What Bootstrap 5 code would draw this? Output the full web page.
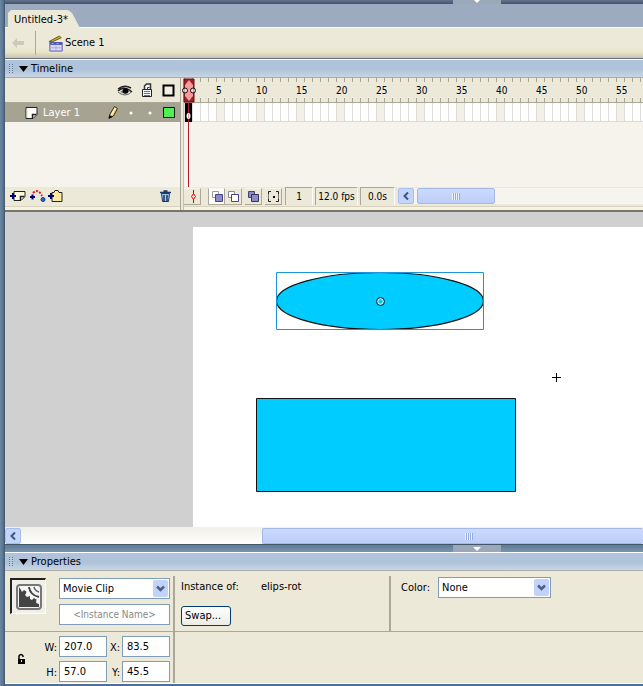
<!DOCTYPE html>
<html lang="en">
<head>
<meta charset="utf-8">
<meta name="viewport" content="width=device-width, initial-scale=1">
<title>Untitled-3*</title>
<link rel="stylesheet" href="https://cdn.jsdelivr.net/npm/bootstrap@5.3.0/dist/css/bootstrap.min.css">
<style>
:root{--face:#ece9d8;--line:#aca899;--field:#7f9db9}
body{font-family:"DejaVu Sans Condensed","DejaVu Sans",sans-serif;font-size:11px;line-height:16px;color:#000;background:#6f8ba8}
svg{display:block;flex:none}
button,select,input{font:inherit;color:#000}
.shell{min-height:100vh;padding-left:5px;background:linear-gradient(90deg,#6d87a3 0,#5a7590 3px,#405468 5px,#6f8ba8 5px)}
.grip-strip{height:4px;background:linear-gradient(#66758d,#42526b);padding-left:448px}
.grip{width:48px;height:100%;background:#9aa8b8}
.tabs{height:23px;padding:6px 0 0 3px;background:#9dabc1}
.doc-tab{width:72px;height:18px;border:0;padding:1px 0 0 6px;text-align:left;background:var(--face);clip-path:polygon(0 3px,3px 0,60px 0,64px 3px,72px 100%,0 100%)}
.scene-bar{height:32px;border-top:1px solid #fff;border-bottom:1px solid #667080;background:linear-gradient(#ece9d8 60%,#e9e5ca 80%,#c5c4b0)}
.back{width:31px;height:24px;border:0;border-right:1px solid var(--line);background:none;padding:0 0 0 6px}
.panel-title{height:19px;border-top:1px solid #fff;border-bottom:1px solid #a9aca9;background:linear-gradient(#b0c3dc,#aec3d8 55%,#c8d6e6);padding-left:4px;gap:4px}
.panel-title h2{font-size:11px;line-height:16px;font-weight:400;margin:0 0 0 -2px}
.dots{width:5px;height:10px;background:repeating-linear-gradient(transparent 0 1px,#bacce0 1px 2px),repeating-linear-gradient(90deg,#5f7592 0 1px,transparent 1px 3px)}
.timeline{display:grid;grid-template-columns:175px 4px 1fr;background:var(--face);border-bottom:2px solid #77766a}
.splitter{background:var(--face);border-left:1px solid var(--line);border-right:1px solid #c5c1b4}
.head-row{height:25px;border-bottom:1px solid #aaa698}
.layer-heads{padding-right:5px}
.layer-row{height:19px;background:#a6a393;color:#fff;padding:0 5px 0 19px}
.keys-empty{height:65px;background:#f5f3ec}
.tool-row{height:23px;padding-bottom:5px;background:var(--face);box-shadow:inset 0 -3px #f6f3df,inset 0 -4px #d6d2bf}
.icon-btn{border:0;padding:0;background:none}
.ruler{padding:5px 0 0 32px;overflow:hidden;background:repeating-linear-gradient(90deg,#a9a596 0 1px,transparent 1px 8px) 0 0/100% 4px no-repeat,repeating-linear-gradient(90deg,#a9a596 0 1px,transparent 1px 8px) 0 100%/100% 4px no-repeat,var(--face);font-size:10px}
.ruler span{flex:0 0 40px}
.frames{height:19px;border-bottom:1px solid #dedbd0;background:repeating-linear-gradient(90deg,#dedcd6 0 1px,transparent 1px 8px),repeating-linear-gradient(90deg,transparent 0 32px,#f3f0e8 32px 40px),#fff}
.track{position:relative}
.playhead{position:absolute;left:-3px;top:0}
.tb{height:17px;width:17px;flex:none;border:0;border-right:1px solid #aca899;border-bottom:1px solid #aca899;border-top:1px solid #f8f6ec;background:var(--face);padding:1px 2px}
.tb.on{background:#fff;border-left:1px solid #aca899}
.tools{gap:3px}
.status{gap:2px}
.status-cell{height:18px;line-height:17px;text-align:center;white-space:nowrap;border-left:1px solid var(--line);border-top:1px solid var(--line);font-size:10px;border-right:1px solid #fff}
.sc-frame{width:28px}.sc-rate{width:43px}.sc-time{width:35px}
.track-bar{background:#f5f4ee;gap:3px}
.sb-btn{width:16px;height:16px;border:1px solid #a9bff0;border-radius:2px;background:#c4d4fb;padding:2px}
.thumb{height:16px;border:1px solid #a4b9ea;border-radius:2px;background:linear-gradient(#cbdafe,#bccdf9);display:flex;align-items:center;justify-content:center}
.ridge{width:8px;height:7px;background:repeating-linear-gradient(90deg,#eef3ff 0 1px,#94abdf 1px 2px)}
.thumb-s{width:78px}
.stage{background:#d0d0d0;padding:15px 0 0 188px;min-height:300px}
.paper{background:#fff;overflow:hidden}
.hscroll{height:18px;padding-top:1px;background:linear-gradient(#f0efe8,#fefefb);border-bottom:1px solid #435568}
.hscroll .thumb{margin-left:241px;border-right:0;padding-left:32px}
.divider-bar{height:7px;padding-left:448px;background:linear-gradient(#5f7b96,#7895b0)}
.props{display:grid;grid-template-columns:170px 216px 1fr;background:var(--face);border-bottom:1px solid #fff}
.cell-a{height:61px;border-bottom:1px solid var(--line)}
.cell-b{height:51px}
.vr-line{background:linear-gradient(var(--line),var(--line)) right 5px/2px 100% no-repeat}
.vr-line.cell-b{background-position:right 0}
.kind-row{padding:7px 5px 0 5px}
.kind{width:36px;height:36px;border:1px solid #fff;border-top:2px solid #222;border-left:2px solid #222;padding:4px;background:#f0efe8}
.field{height:21px;border:1px solid var(--field);border-radius:0;background:#fff;padding:0 4px;min-width:0}
select.field{appearance:none;width:100%;padding:0 3px}
.combo{position:relative;width:111px}
.combo svg{position:absolute;right:2px;top:2px;pointer-events:none}
.combo-w{width:113px}
.inst{width:111px;text-align:center;font-size:10px}
.inst::placeholder{color:#888;opacity:1}
.kind-fields{gap:5px}
.nums{display:grid;grid-template-columns:33px 21px 48px 15px 48px;row-gap:3px;padding-top:3px;align-items:center}
.nums label{text-align:right;padding:3px 2px 0 0}
.nums .lock-cell{grid-row:span 2}
.swap{width:50px;height:20px;border:1px solid #003c74;border-radius:3px;background:linear-gradient(#fff,#ecebe6);padding:0 3px;text-align:left}
.inst-label{width:80px}
.col-mid{padding:8px 0 0 6px}
.col-mid .swap{margin-top:11px}
.col-tint{padding:6px 0 0 10px}
.foot-line{height:2px;background:#4a709c}
</style>
<script src="https://cdn.jsdelivr.net/npm/bootstrap@5.3.0/dist/js/bootstrap.bundle.min.js"></script>
</head>
<body>
<div class="shell d-flex flex-column">
  <div class="grip-strip"><div class="grip"><svg class="mx-auto" width="8" height="4"><path d="M1 0h6L4 3z" fill="#fff"/></svg></div></div>
  <div class="tabs"><button class="doc-tab">Untitled-3*</button></div>
  <nav class="scene-bar d-flex align-items-center">
    <button class="back" aria-label="Back"><svg width="14" height="12"><path d="M6 1 1 6l5 5V8h7V4H6z" fill="#cdcabb"/></svg></button>
    <svg class="ms-2 ps-1" width="21" height="17" viewBox="0 0 18 18"><path d="M1 7 12 1l2 2L5 7z" fill="#bda92e" stroke="#6b6015"/><path d="M2 8h13v9H2z" fill="#d8d8fa" stroke="#5656b0"/><path d="M2 7.500h13v3H2z" fill="#5656b0"/><path d="M4 9h2M9 9h2M3 13.500h11M8.500 11v5" stroke="#aaaae0"/></svg>
    <span>Scene 1</span>
  </nav>
  <div class="panel-title d-flex align-items-center"><span class="dots"></span><svg width="11" height="8"><path d="M1 1h9L5.500 7z"/></svg><h2>Timeline</h2></div>

  <section class="timeline">
    <div>
      <div class="head-row layer-heads d-flex align-items-center justify-content-end gap-1">
        <button class="icon-btn" aria-label="Show or hide layers"><svg width="16" height="14"><path d="M1 6q6-5 13-1M1 8q6-6 14 1" fill="none" stroke="#222" stroke-width="1.500"/><path d="M3 9q5-5 10-1-4 4-10 1" fill="#777"/><circle cx="8.500" cy="8" r="2.800"/><path d="M1 9l3 2 4 1 4-1 2-2" fill="none" stroke="#666"/></svg></button>
        <button class="icon-btn ms-1" aria-label="Lock layers"><svg width="13" height="15"><path d="M3.500 7V3l2-2h4v6" fill="#fff" stroke="#333" stroke-width="1.500"/><path d="M6.500 6.500v-2h2" fill="none" stroke="#333"/><path d="M1.500 6.500h9v7h-9z" fill="#f3f8fa" stroke="#222"/><path d="M3 8.500h6M3 10.500h6M3 12.500h6" stroke="#5f7884"/></svg></button>
        <button class="icon-btn ms-1" aria-label="Show outlines"><svg width="13" height="13"><path d="M1.500 1.500h10v10h-10z" fill="#f2f0e5" stroke="#000" stroke-width="2"/></svg></button>
      </div>
      <div class="layer-row d-flex align-items-center">
        <svg width="15" height="14"><path d="M2 1.500h11v7l-4 4H2z" fill="#fff" stroke="#222"/><path d="M8.500 12V8.500h4" fill="#ddd" stroke="#222" stroke-width="1.500"/><path d="M3 2.500v9" stroke="#ded9a0"/></svg>
        <span class="ms-1 me-auto">Layer 1</span>
        <svg width="12" height="15"><path d="M2 13 3 9 7.500 1.500l3 2L6.500 11z" fill="#edc25c" stroke="#332"/><path d="M4.500 10 8.500 3" stroke="#fff6cd" stroke-width="1.500"/><path d="m1.500 14 1-4 3 2z"/></svg>
        <svg width="44" height="14"><circle cx="12" cy="7" r="1.500" fill="#fff"/><circle cx="31" cy="7" r="1.500" fill="#fff"/></svg>
        <svg width="12" height="13"><path d="M.500 1.500h11v10H.500z" fill="#4ff04f" stroke="#111"/></svg>
      </div>
      <div class="keys-empty"></div>
      <div class="tool-row d-flex align-items-center px-1">
        <button class="icon-btn" aria-label="Insert layer"><svg width="17" height="14"><path d="M5 2.500h11v5l-4 4H5z" fill="#fffce0" stroke="#222"/><path d="M11.500 11V7.500h4" fill="none" stroke="#222" stroke-width="1.500"/><path d="M1 7h6M4 4v6" stroke="#000078" stroke-width="2"/></svg></button>
        <button class="icon-btn ms-1" aria-label="Add motion guide"><svg width="16" height="14"><path d="M3 4q5-5 9 3" fill="none" stroke="#dd1818" stroke-width="2" stroke-dasharray="2 1.500"/><circle cx="13" cy="10.500" r="2" fill="#2864c8" stroke="#123c80"/><path d="M0 8h5M2.500 5.500v5" stroke="#000078" stroke-width="2"/></svg></button>
        <button class="icon-btn me-auto" aria-label="Insert layer folder"><svg width="18" height="14"><path d="M6 12.500v-9h2l1-2h3l1 2h3v9z" fill="#fbeaa0" stroke="#222"/><path d="M2 7h6M5 4v6" stroke="#000078" stroke-width="2"/></svg></button>
        <button class="icon-btn me-1" aria-label="Delete layer"><svg width="13" height="14"><path d="M2.500 4.500h8l-1 8h-6z" fill="#a8c4e8" stroke="#173a68"/><path d="M1 3.500h11M4.500 2h4M5 6v6M8 6v6" stroke="#173a68" stroke-width="1.500"/></svg></button>
      </div>
    </div>
    <div class="splitter"></div>
    <div class="track overflow-visible">
      <div class="head-row ruler d-flex"><span>5</span><span>10</span><span>15</span><span>20</span><span>25</span><span>30</span><span>35</span><span>40</span><span>45</span><span>50</span><span>55</span></div>
      <div class="frames"></div>
      <div class="keys-empty"></div>
      <div class="tool-row tools d-flex align-items-center overflow-hidden">
        <button class="tb me-1" aria-label="Center frame"><svg width="13" height="13"><path d="M7.500 0v4M7.500 9v4" stroke="#d00"/><path d="M7.500 3.500 9.500 6.500 7.500 9.500 5.500 6.500z" fill="#ffd8d0" stroke="#d00"/></svg></button>
        <div class="d-flex">
          <button class="tb on" aria-label="Onion skin"><svg width="13" height="13"><path d="M1.500 1.500h6v6h-6z" fill="#fff" stroke="#99a"/><path d="M4.500 4.500h7v7h-7z" fill="#8c8ccd" stroke="#448"/></svg></button>
          <button class="tb" aria-label="Onion skin outlines"><svg width="13" height="13"><path d="M1.500 1.500h6v6h-6z" fill="#fff" stroke="#889"/><path d="M4.500 4.500h7v7h-7z" fill="#fff" stroke="#448"/></svg></button>
        </div>
        <button class="tb" aria-label="Edit multiple frames"><svg width="13" height="13"><path d="M1.500 1.500h6v6h-6z" fill="#8c8ccd" stroke="#446"/><path d="M4.500 4.500h7v7h-7z" fill="#8c8ccd" stroke="#335"/></svg></button>
        <button class="tb" aria-label="Modify onion markers"><svg width="13" height="13"><path d="M4 1.500H1.500v3M1.500 8.500v3H4M9 1.500h2.500v3M11.500 8.500v3H9" fill="none" stroke="#222"/><path d="M1.500 4v5M11.500 4v5" stroke="#777"/><path d="M6 6h2v2H6z"/></svg></button>
        <div class="status d-flex"><div class="status-cell sc-frame">1</div><div class="status-cell sc-rate">12.0 fps</div><div class="status-cell sc-time">0.0s</div></div>
        <div class="track-bar d-flex flex-grow-1"><button class="sb-btn" aria-label="Scroll left"><svg width="10" height="10"><path d="M7 1.500 3.500 5 7 8.500" fill="none" stroke="#3d5685" stroke-width="2"/></svg></button><div class="thumb thumb-s"><span class="ridge"></span></div></div>
      </div>
      <svg class="playhead" width="16" height="109"><path d="M3 1h10v23H3z" fill="#9c2028" stroke="#6c1016"/><path d="M8 2l4 5v11l-4 5-4-5V7z" fill="#fb9a9a"/><circle cx="4" cy="12.500" r="2.500" fill="#fff" fill-opacity=".6" stroke="#111"/><circle cx="12" cy="12.500" r="2.500" fill="#fff" fill-opacity=".6" stroke="#111"/><path d="M4 25h7v19H4z"/><path d="M7.500 25v84" stroke="#b01c2c"/><ellipse cx="7.500" cy="38" rx="2" ry="3" fill="#fff"/><path d="M7.500 36v4" stroke="#b01c2c" stroke-opacity=".5"/></svg>
    </div>
  </section>

  <main class="stage flex-grow-1 d-flex">
    <div class="paper flex-grow-1">
      <svg width="450" height="299" role="img" aria-label="Ellipse and rectangle">
        <ellipse cx="187" cy="74" rx="103.500" ry="28.500" fill="#0cf" stroke="#111" stroke-width="1.200"/>
        <path d="M83.500 45.500h207v57h-207z" fill="none" stroke="#1c94d8"/>
        <circle cx="187.500" cy="74.500" r="2.800" fill="#0cf" stroke="#fff"/><circle cx="187.500" cy="74.500" r="4" fill="none" stroke="#123"/>
        <path d="M63.500 171.500h259v93h-259z" fill="#0cf" stroke="#111"/>
        <path d="M359 150.500h9M363.500 146v9" stroke="#000"/>
      </svg>
    </div>
  </main>
  <div class="hscroll d-flex"><button class="sb-btn" aria-label="Scroll left"><svg width="10" height="10"><path d="M7 1.500 3.500 5 7 8.500" fill="none" stroke="#3d5685" stroke-width="2"/></svg></button><div class="thumb flex-grow-1"><span class="ridge"></span></div></div>
  <div class="divider-bar"><div class="grip"><svg class="mx-auto" width="10" height="6"><path d="M1 2h8L5 6z" fill="#fff"/></svg></div></div>

  <div class="panel-title d-flex align-items-center"><span class="dots"></span><svg width="11" height="8"><path d="M1 1h9L5.500 7z"/></svg><h2>Properties</h2></div>
  <section class="props">
    <div class="cell-a vr-line kind-row d-flex">
      <div class="kind"><svg width="27" height="27"><rect x="1" y="1" width="24" height="24" rx="3" fill="#f4f4f4" stroke="#777" stroke-width="2"/><path d="M3 3v20h20v-3l-3-1 1-3-3-2-2 2-2-1v-3l-3 1-2-2 2-3-3-2-2 2-1-2z" fill="#444"/><path d="M6 3l1 2 3-2 2 3-1 3 2 1 3-1v3l2 1 2-1 2 3-1 2 2 1" fill="none" stroke="#fff" stroke-width="1.500"/><path d="M13 3q1 8 10 10" fill="none" stroke="#444" stroke-width="2"/><path d="M18 3q1 4 5 5" fill="none" stroke="#666" stroke-width="1.500"/></svg></div>
      <div class="kind-fields d-flex flex-column ms-auto">
        <div class="combo"><select class="field" aria-label="Symbol behavior"><option>Movie Clip</option></select><svg width="15" height="17"><rect width="15" height="17" rx="2" fill="#c1d2fb"/><path d="M4 6.500 7.500 10 11 6.500" fill="none" stroke="#4d6185" stroke-width="2.500"/></svg></div>
        <input class="field inst" aria-label="Instance name" placeholder="&lt;Instance Name&gt;">
      </div>
    </div>
    <div class="cell-a vr-line col-mid">
      <div class="d-flex"><span class="inst-label">Instance of:</span><span>elips-rot</span></div>
      <button class="swap">Swap...</button>
    </div>
    <div class="cell-a col-tint"><div class="d-flex align-items-center gap-2"><label for="tint">Color:</label><div class="combo combo-w"><select class="field" id="tint"><option>None</option></select><svg width="15" height="17"><rect width="15" height="17" rx="2" fill="#c1d2fb"/><path d="M4 6.500 7.500 10 11 6.500" fill="none" stroke="#4d6185" stroke-width="2.500"/></svg></div></div></div>
    <div class="cell-b vr-line nums">
      <button class="icon-btn lock-cell ps-2 ms-1" aria-label="Constrain proportions"><svg width="9" height="12"><path d="M2 6V3q2-3 4 0v1" fill="none" stroke="#000" stroke-width="1.500"/><path d="M1 6h7v5H1z"/><path d="M4 7h1v2H4z" fill="#ddd"/></svg></button>
      <label for="w">W:</label><input class="field" id="w" value="207.0"><label for="x">X:</label><input class="field" id="x" value="83.5">
      <label for="h">H:</label><input class="field" id="h" value="57.0"><label for="y">Y:</label><input class="field" id="y" value="45.5">
    </div>
    <div class="cell-b"></div><div class="cell-b"></div>
  </section>
  <div class="foot-line"></div>
</div>
</body>
</html>
